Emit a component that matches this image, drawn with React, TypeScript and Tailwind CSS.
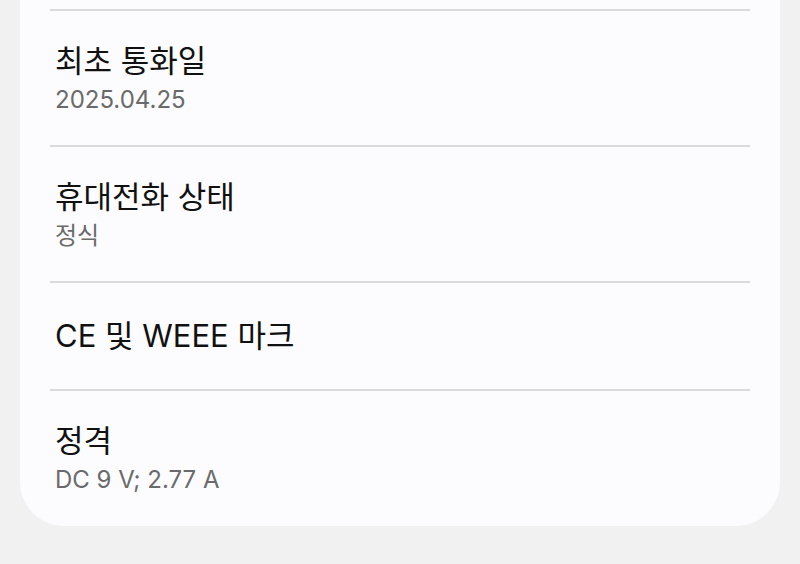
import React from "react";

type Item = { title: string; value?: string };

const items: Item[] = [
  { title: "최초 통화일", value: "2025.04.25" },
  { title: "휴대전화 상태", value: "정식" },
  { title: "CE 및 WEEE 마크" },
  { title: "정격", value: "DC 9 V; 2.77 A" },
];

function InfoRow({ title, value }: Item) {
  return (
    <div
      className={
        value
          ? "flex h-[134px] flex-col justify-center px-[5px]"
          : "flex h-[106px] flex-col justify-center px-[5px]"
      }
    >
      <p className="text-[31px] leading-[38px] text-[#111111]">{title}</p>
      {value && (
        <p className="mt-[5px] text-[24px] leading-[30px] text-[#6a6a6a]">
          {value}
        </p>
      )}
    </div>
  );
}

export default function App() {
  return (
    <div
      className="h-[564px] w-full overflow-hidden bg-[#f1f1f1] px-[20px]"
      style={{ fontFamily: 'Inter, "Noto Sans CJK KR", sans-serif' }}
    >
      <div className="rounded-b-[44px] bg-[#fcfcfe] px-[30px] pt-[9px] pb-[1px]">
        {items.map((item) => (
          <div key={item.title}>
            <div className="h-[2px] bg-[#dadada]" />
            <InfoRow {...item} />
          </div>
        ))}
      </div>
    </div>
  );
}
